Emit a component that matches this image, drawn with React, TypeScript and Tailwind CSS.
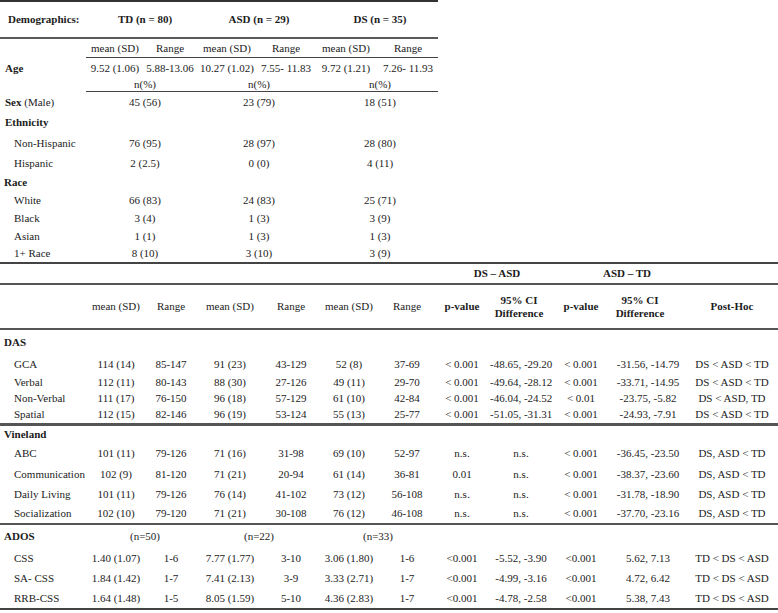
const top = "grid grid-cols-[86px_58px_52px_62px_56px_64px_60px]";
const bottom =
  "grid grid-cols-[86px_60px_50px_68px_54px_62px_54px_56px_62px_58px_76px_92px]";

const ethnicity = [
  ["Non-Hispanic", "76 (95)", "28 (97)", "28 (80)"],
  ["Hispanic", "2 (2.5)", "0 (0)", "4 (11)"],
];

const race = [
  ["White", "66 (83)", "24 (83)", "25 (71)"],
  ["Black", "3 (4)", "1 (3)", "3 (9)"],
  ["Asian", "1 (1)", "1 (3)", "1 (3)"],
  ["1+ Race", "8 (10)", "3 (10)", "3 (9)"],
];

const das = [
  ["GCA", "114 (14)", "85-147", "91 (23)", "43-129", "52 (8)", "37-69", "< 0.001", "-48.65, -29.20", "< 0.001", "-31.56, -14.79", "DS < ASD < TD", "h-[19px]"],
  ["Verbal", "112 (11)", "80-143", "88 (30)", "27-126", "49 (11)", "29-70", "< 0.001", "-49.64, -28.12", "< 0.001", "-33.71, -14.95", "DS < ASD < TD", "h-[16px]"],
  ["Non-Verbal", "111 (17)", "76-150", "96 (18)", "57-129", "61 (10)", "42-84", "< 0.001", "-46.04, -24.52", "< 0.01", "-23.75, -5.82", "DS < ASD, TD", "h-[16px]"],
  ["Spatial", "112 (15)", "82-146", "96 (19)", "53-124", "55 (13)", "25-77", "< 0.001", "-51.05, -31.31", "< 0.001", "-24.93, -7.91", "DS < ASD < TD", "h-[17px]"],
];

const vineland = [
  ["ABC", "101 (11)", "79-126", "71 (16)", "31-98", "69 (10)", "52-97", "n.s.", "n.s.", "< 0.001", "-36.45, -23.50", "DS, ASD < TD", "h-[21px]"],
  ["Communication", "102 (9)", "81-120", "71 (21)", "20-94", "61 (14)", "36-81", "0.01", "n.s.", "< 0.001", "-38.37, -23.60", "DS, ASD < TD", "h-[20px]"],
  ["Daily Living", "101 (11)", "79-126", "76 (14)", "41-102", "73 (12)", "56-108", "n.s.", "n.s.", "< 0.001", "-31.78, -18.90", "DS, ASD < TD", "h-[20px]"],
  ["Socialization", "102 (10)", "79-120", "71 (21)", "30-108", "76 (12)", "46-108", "n.s.", "n.s.", "< 0.001", "-37.70, -23.16", "DS, ASD < TD", "h-[19px]"],
];

const ados = [
  ["CSS", "1.40 (1.07)", "1-6", "7.77 (1.77)", "3-10", "3.06 (1.80)", "1-6", "<0.001", "-5.52, -3.90", "<0.001", "5.62, 7.13", "TD < DS < ASD"],
  ["SA- CSS", "1.84 (1.42)", "1-7", "7.41 (2.13)", "3-9", "3.33 (2.71)", "1-7", "<0.001", "-4.99, -3.16", "<0.001", "4.72, 6.42", "TD < DS < ASD"],
  ["RRB-CSS", "1.64 (1.48)", "1-5", "8.05 (1.59)", "5-10", "4.36 (2.83)", "1-7", "<0.001", "-4.78, -2.58", "<0.001", "5.38, 7.43", "TD < DS < ASD"],
];

function CountRow({ row, h }: { row: string[]; h: string }) {
  return (
    <div className={`${top} items-center ${h}`}>
      <div className="pl-[14px]">{row[0]}</div>
      <div className="col-span-2 pl-2 text-center">{row[1]}</div>
      <div className="col-span-2 pl-2 text-center">{row[2]}</div>
      <div className="col-span-2 pl-2 text-center">{row[3]}</div>
    </div>
  );
}

function StatRow({ row, h }: { row: string[]; h: string }) {
  return (
    <div className={`${bottom} items-center ${h}`}>
      <div className="pl-[14px]">{row[0]}</div>
      {row.slice(1, 12).map((v, i) => (
        <div key={i} className="text-center whitespace-nowrap">
          {v}
        </div>
      ))}
    </div>
  );
}

export default function App() {
  return (
    <div className="w-[778px] h-[613px] bg-white text-[#1c1c1c] text-[11px] leading-[13px] font-['Liberation_Serif','Times_New_Roman',serif]">
      {/* demographics */}
      <div className="w-[438px] border-t-2 border-[#333]">
        <div className={`${top} items-center h-[37px] font-bold border-b-2 border-[#5a5a5a]`}>
          <div className="pl-2">Demographics:</div>
          <div className="col-span-2 pl-2 text-center">TD (n = 80)</div>
          <div className="col-span-2 pl-2 text-center">ASD (n = 29)</div>
          <div className="col-span-2 pl-2 text-center">DS (n = 35)</div>
        </div>
        <div className={`${top} h-[19px]`}>
          <div />
          <div className="col-span-6 grid grid-cols-[58px_52px_62px_56px_64px_60px] items-center border-b border-[#444]">
            <div className="text-center">mean (SD)</div>
            <div className="text-center">Range</div>
            <div className="text-center">mean (SD)</div>
            <div className="text-center">Range</div>
            <div className="text-center">mean (SD)</div>
            <div className="text-center">Range</div>
          </div>
        </div>
        <div className={`${top} items-center h-[20px]`}>
          <div className="pl-[5px] font-bold">Age</div>
          <div className="text-center">9.52 (1.06)</div>
          <div className="text-center">5.88-13.06</div>
          <div className="text-center">10.27 (1.02)</div>
          <div className="text-center">7.55- 11.83</div>
          <div className="text-center">9.72 (1.21)</div>
          <div className="text-center">7.26- 11.93</div>
        </div>
        <div className={`${top} h-[13px]`}>
          <div />
          <div className="col-span-6 grid grid-cols-[110px_118px_124px] items-center border-b border-[#444]">
            <div className="pl-2 text-center">n(%)</div>
            <div className="pl-2 text-center">n(%)</div>
            <div className="pl-2 text-center">n(%)</div>
          </div>
        </div>
        <div className={`${top} items-center h-[22px]`}>
          <div className="pl-[5px]">
            <span className="font-bold">Sex</span> (Male)
          </div>
          <div className="col-span-2 pl-2 text-center">45 (56)</div>
          <div className="col-span-2 pl-2 text-center">23 (79)</div>
          <div className="col-span-2 pl-2 text-center">18 (51)</div>
        </div>
        <div className="h-[19px] flex items-center pl-[5px] font-bold">Ethnicity</div>
        <CountRow row={ethnicity[0]} h="h-[22px]" />
        <CountRow row={ethnicity[1]} h="h-[19px]" />
        <div className="h-[18px] flex items-center pl-[4px] font-bold">Race</div>
        <CountRow row={race[0]} h="h-[18px]" />
        <CountRow row={race[1]} h="h-[18px]" />
        <CountRow row={race[2]} h="h-[18px]" />
        <CountRow row={race[3]} h="h-[17px]" />
      </div>

      {/* comparisons */}
      <div className="w-[778px] border-t-2 border-[#444]">
        <div className={`${bottom} items-center h-[21px] font-bold border-b-2 border-[#555]`}>
          <div className="col-span-7" />
          <div className="col-span-2 pl-2 text-center">DS – ASD</div>
          <div className="col-span-2 pl-4 text-center">ASD – TD</div>
          <div />
        </div>
        <div className={`${bottom} items-center h-[45px] border-b-2 border-[#555]`}>
          <div />
          <div className="text-center">mean (SD)</div>
          <div className="text-center">Range</div>
          <div className="text-center">mean (SD)</div>
          <div className="text-center">Range</div>
          <div className="text-center">mean (SD)</div>
          <div className="text-center">Range</div>
          <div className="text-center font-bold">p-value</div>
          <div className="text-center font-bold pr-1">
            95% CI
            <br />
            Difference
          </div>
          <div className="text-center font-bold">p-value</div>
          <div className="text-center font-bold pr-4">
            95% CI
            <br />
            Difference
          </div>
          <div className="text-center font-bold">Post-Hoc</div>
        </div>

        <div className="h-[25px] flex items-center pl-[4px] font-bold">DAS</div>
        {das.map((r) => (
          <StatRow key={r[0]} row={r} h={r[12]} />
        ))}
        <div className="border-t-[3px] border-[#555]" />

        <div className="h-[17px] flex items-center pl-[4px] font-bold">Vineland</div>
        {vineland.map((r) => (
          <StatRow key={r[0]} row={r} h={r[12]} />
        ))}
        <div className="border-t-2 border-[#555]" />

        <div className={`${bottom} items-center h-[23px]`}>
          <div className="pl-[4px] font-bold">ADOS</div>
          <div className="col-span-2 pl-2 text-center">(n=50)</div>
          <div className="col-span-2 pl-1 text-center">(n=22)</div>
          <div className="col-span-2 pl-1 text-center">(n=33)</div>
        </div>
        {ados.map((r) => (
          <StatRow key={r[0]} row={r} h="h-[20px]" />
        ))}
        <div className="border-t-2 border-[#444]" />
      </div>
    </div>
  );
}
